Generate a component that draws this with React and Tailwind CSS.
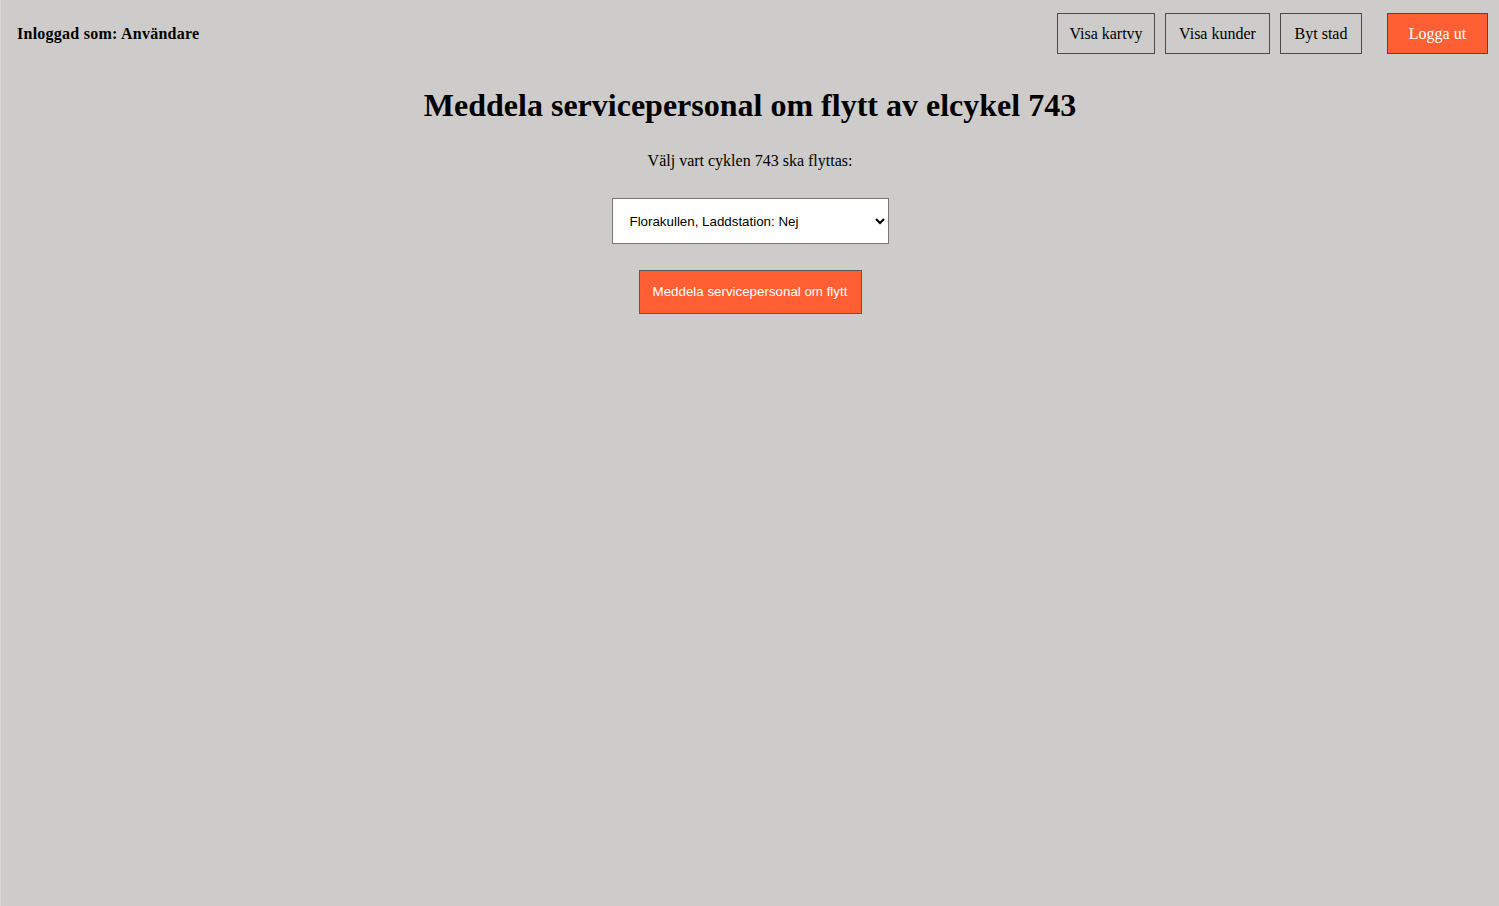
import React from 'react';

const NavButton = ({ width, children }) => (
  <button className={`h-[41px] border border-[#4a4a4a] bg-transparent text-base text-black ${width}`}>
    {children}
  </button>
);

const App = () => {
  return (
    <div className="min-h-[906px] border-l border-l-[#d9d8d6] bg-[#cdccca] font-['Liberation_Serif',serif] text-black">
      <header className="flex h-[67px] items-center justify-between pl-4 pr-[11px]">
        <p className="text-base font-bold tracking-[0.25px]">Inloggad som: Användare</p>
        <nav className="flex items-center">
          <div className="flex gap-[10px]">
            <NavButton width="w-[98px]">Visa kartvy</NavButton>
            <NavButton width="w-[105px]">Visa kunder</NavButton>
            <NavButton width="w-[82px]">Byt stad</NavButton>
          </div>
          <button className="ml-[25px] h-[41px] w-[101px] border border-[#4a4a4a] bg-[#ff5f33] text-base text-white">
            Logga ut
          </button>
        </nav>
      </header>

      <main className="flex flex-col items-center">
        <h1 className="mt-[18px] text-[32px] font-bold leading-[40px]">
          Meddela servicepersonal om flytt av elcykel 743
        </h1>
        <p className="mt-[24px] text-base">Välj vart cyklen 743 ska flyttas:</p>
        <select
          defaultValue="florakullen"
          className="mt-[25px] h-[46px] w-[277px] border border-[#767676] bg-white pl-[13px] pr-1 font-['Liberation_Sans',sans-serif] text-[13.33px] text-black"
        >
          <option value="florakullen">Florakullen, Laddstation: Nej</option>
        </select>
        <button className="mt-[26px] h-[44px] w-[223px] border border-[#5a5a5a] bg-[#ff5f33] font-['Liberation_Sans',sans-serif] text-[13.33px] text-white">
          Meddela servicepersonal om flytt
        </button>
      </main>
    </div>
  );
};

export default App;
